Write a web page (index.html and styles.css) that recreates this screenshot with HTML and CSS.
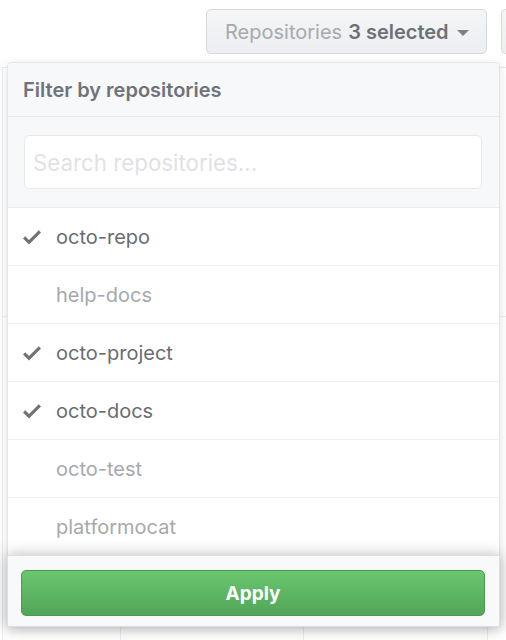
FILE: index.html
```html
<!DOCTYPE html>
<html>
<head>
<meta charset="utf-8">
<link rel="stylesheet" href="styles.css">
</head>
<body>
<div class="toolbar">
  <button class="btn btn-repos">Repositories <strong>3 selected</strong><span class="caret"></span></button>
  <button class="btn btn-next"></button>
</div>
<div class="table">
  <div class="table-row tall"></div>
  <div class="table-row cols">
    <div class="cell c1"></div>
    <div class="cell c2"></div>
    <div class="cell c3"></div>
    <div class="cell c4"></div>
  </div>
</div>

<div class="popup">
  <div class="popup-title">Filter by repositories</div>
  <div class="popup-filter">
    <input class="search" type="text" placeholder="Search repositories...">
  </div>
  <ul class="list">
    <li class="item selected"><svg class="check" viewBox="0 0 12 16" width="18" height="24"><path d="M12 5l-8 8-4-4 1.5-1.5L4 10l6.5-6.5L12 5z"/></svg><span>octo-repo</span></li>
    <li class="item"><span>help-docs</span></li>
    <li class="item selected"><svg class="check" viewBox="0 0 12 16" width="18" height="24"><path d="M12 5l-8 8-4-4 1.5-1.5L4 10l6.5-6.5L12 5z"/></svg><span>octo-project</span></li>
    <li class="item selected"><svg class="check" viewBox="0 0 12 16" width="18" height="24"><path d="M12 5l-8 8-4-4 1.5-1.5L4 10l6.5-6.5L12 5z"/></svg><span>octo-docs</span></li>
    <li class="item"><span>octo-test</span></li>
    <li class="item"><span>platformocat</span></li>
  </ul>
  <div class="popup-footer">
    <button class="apply">Apply</button>
  </div>
</div>
</body>
</html>
```

FILE: styles.css
```css
html, body {
  margin: 0;
  padding: 0;
  overflow: hidden;
  background: #ffffff;
  font-family: "Inter", "Liberation Sans", Arial, sans-serif;
}

body {
  position: relative;
  width: 506px;
  height: 640px;
}

.toolbar {
  display: flex;
  justify-content: flex-end;
  gap: 14px;
  padding-top: 9px;
}

.btn {
  box-sizing: border-box;
  height: 45px;
  border: 1px solid #d6d9dc;
  border-radius: 5px;
  background: linear-gradient(#f3f5f7, #eceef1);
  font-family: inherit;
  font-size: 20px;
  color: #a6aaae;
  padding: 0 0 0 18px;
  display: flex;
  align-items: center;
  flex-shrink: 0;
}

.btn-repos {
  width: 281px;
}

.btn strong {
  color: #6d7176;
  font-weight: 600;
  margin-left: 6px;
}

.caret {
  display: inline-block;
  width: 0;
  height: 0;
  margin-left: 8px;
  margin-top: 2px;
  border-top: 6px solid #7d8186;
  border-left: 6px solid transparent;
  border-right: 6px solid transparent;
}

.btn-next {
  width: 5px;
  padding: 0;
  border-right: 0;
  border-radius: 5px 0 0 5px;
}

.table {
  margin-top: 13px;
  margin-left: 2px;
  border-top: 1px solid #e8eaed;
  border-left: 1px solid #eceef0;
}

.table-row.tall {
  height: 248px;
  border-bottom: 1px solid #eceef0;
}

.table-row.cols {
  display: flex;
  height: 330px;
}

.cell {
  box-sizing: border-box;
  height: 100%;
  flex-shrink: 0;
  border-right: 1px solid #eceef0;
}

.c1 { width: 118px; }
.c2 { width: 183px; }
.c3 { width: 184px; }
.c4 { width: 18px; border-right: 0; }

.popup {
  position: absolute;
  top: 62px;
  left: 7px;
  width: 493px;
  height: 565px;
  box-sizing: border-box;
  border: 1px solid #e3e5e8;
  border-radius: 4px 4px 0 0;
  background: #ffffff;
  box-shadow: 0 3px 12px rgba(27, 31, 35, 0.12);
  display: flex;
  flex-direction: column;
}

.popup-title {
  box-sizing: border-box;
  height: 54px;
  padding: 0 15px;
  display: flex;
  align-items: center;
  background: #f7f8fa;
  border-bottom: 1px solid #eaecef;
  border-radius: 4px 4px 0 0;
  font-size: 20px;
  font-weight: 600;
  color: #6f7378;
}

.popup-filter {
  box-sizing: border-box;
  height: 91px;
  padding: 18px 17px 17px 16px;
  background: #f7f8fa;
  border-bottom: 1px solid #eaecef;
}

.search {
  box-sizing: border-box;
  width: 100%;
  height: 54px;
  border: 1px solid #e8eaed;
  border-radius: 5px;
  background: #ffffff;
  padding: 0 8px;
  font-family: inherit;
  font-size: 22.3px;
  color: #444;
  outline: none;
}

.search::placeholder {
  color: #dfe2e5;
}

.list {
  list-style: none;
  margin: 0;
  padding: 0;
  flex: 1;
  overflow: hidden;
}

.item {
  box-sizing: border-box;
  height: 58px;
  border-bottom: 1px solid #eff0f2;
  display: flex;
  align-items: center;
  padding-left: 48px;
  font-size: 20px;
  color: #a5a9ad;
}

.item.selected {
  padding-left: 15px;
  color: #696d72;
}

.check {
  fill: #6f7378;
  margin-right: 15px;
  flex-shrink: 0;
}

.popup-footer {
  box-sizing: border-box;
  height: 72px;
  margin: 0 -1px -1px -1px;
  padding: 14px 14px 12px 13px;
  background: #f8f9fb;
  border: 1px solid #dcdfe2;
  box-shadow: 0 0 14px rgba(0, 0, 0, 0.28);
  position: relative;
}

.apply {
  box-sizing: border-box;
  width: 100%;
  height: 46px;
  border: 1px solid #4c9a51;
  border-radius: 5px;
  background: linear-gradient(#69c76f, #52a558);
  color: #ffffff;
  font-family: inherit;
  font-size: 19px;
  font-weight: 700;
}
```
